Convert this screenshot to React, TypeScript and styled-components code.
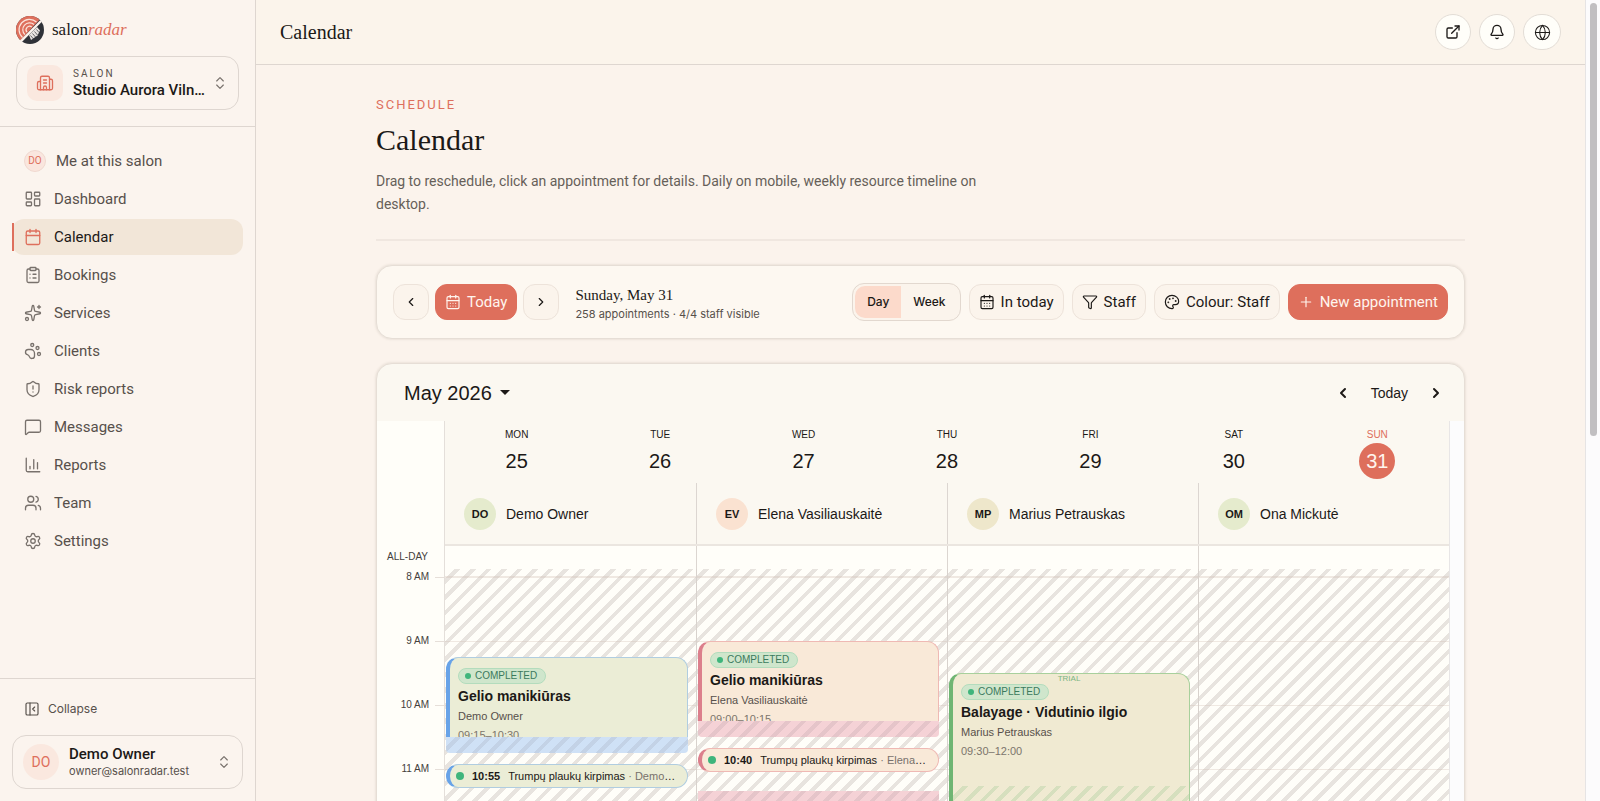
import React from "react";
import styled, { createGlobalStyle, css } from "styled-components";
import {
  Bell, Building2, Calendar as CalendarIcon, CalendarDays, ChartColumn, ChevronLeft, ChevronRight, ChevronsUpDown,
  ClipboardList, ExternalLink, Funnel, Globe, LayoutDashboard, MessageSquare, Palette, PanelLeftClose, PawPrint, Plus,
  Settings, ShieldAlert, Sparkles, Users,
} from "lucide-react";

const c = {
  page: "#fbf3ec",
  header: "#fbf4eb",
  line: "#ded6d0",
  coral: "#de6f5c",
  ink: "#1c1917",
  text: "#57504b",
  soft: "#665f59",
  muted: "#78716c",
  card: "#fdf8f1",
  paper: "#fffef9",
  calHead: "#fbf8f1",
};
const sans = `Roboto, "Liberation Sans", sans-serif`;
const serif = `"Liberation Serif", serif`;
const helv = `"Liberation Sans", Arial, sans-serif`;

const HOUR = 64;
const LEAD = 8;

const Global = createGlobalStyle`
  *, *::before, *::after { box-sizing: border-box; }
  body { margin: 0; background: ${c.page}; color: ${c.ink}; font: 14px/20px ${sans}; }
  button { font: inherit; color: inherit; background: none; border: 0; padding: 0; cursor: pointer; }
  a { color: inherit; text-decoration: none; }
  h1, h2, p { margin: 0; font-weight: 400; }
  svg { flex: none; display: block; }
`;

const Shell = styled.div`
  display: grid;
  grid-template-columns: 256px minmax(0, 1fr) 15px;
  height: 100vh;
  overflow: hidden;
`;

/* Sidebar */
const Sidebar = styled.aside`
  display: flex;
  flex-direction: column;
  border-right: 1px solid ${c.line};
  background: #fbf4ee;
  min-height: 0;
`;
const SidebarTop = styled.div`
  display: flex;
  flex-direction: column;
  gap: 12px;
  padding: 16px;
  border-bottom: 1px solid ${c.line};
`;
const Brand = styled.a`
  display: flex;
  align-items: center;
  gap: 8px;
  height: 28px;
  font: 17px/28px ${serif};
  em { color: ${c.coral}; }
`;
const SwitchCard = styled.button`
  display: flex;
  align-items: center;
  gap: 10px;
  width: 100%;
  height: 54px;
  padding: 0 10px;
  border: 1px solid ${c.line};
  border-radius: 14px;
  text-align: left;
  > svg {
    margin-left: -6px;
    color: ${c.muted};
  }
`;
const SwitchBody = styled.span`
  flex: 1;
  min-width: 0;
  display: flex;
  flex-direction: column;
`;
const Overline = styled.span`
  font-size: 10px;
  line-height: 14px;
  letter-spacing: 2px;
  color: ${c.text};
`;
const Strong = styled.span`
  font-size: 15px;
  line-height: 18px;
  font-weight: 500;
  overflow: hidden;
  white-space: nowrap;
  text-overflow: ellipsis;
`;
const Small = styled.span`
  font: 11px/16px Inter, sans-serif;
  color: ${c.text};
`;
const Tile = styled.span<{ $round?: boolean }>`
  display: grid;
  place-items: center;
  flex: none;
  width: 36px;
  height: 36px;
  border-radius: ${(p) => (p.$round ? "50%" : "10px")};
  background: #fae8df;
  color: ${c.coral};
`;
const Nav = styled.nav`
  flex: 1;
  display: flex;
  flex-direction: column;
  gap: 2px;
  padding: 16px 12px;
`;
const NavItem = styled.a<{ $active?: boolean; $tight?: boolean }>`
  position: relative;
  display: flex;
  align-items: center;
  gap: ${(p) => (p.$tight ? 10 : 12)}px;
  height: 36px;
  padding: 0 12px;
  border-radius: 12px;
  font-size: 15px;
  color: ${c.text};
  > svg { color: ${c.muted}; }
  ${(p) => p.$active && css`
    background: #f2e6d8;
    color: ${c.ink};
    > svg { color: ${c.coral}; }
    &::before {
      content: "";
      position: absolute;
      left: 0;
      top: 4px;
      bottom: 4px;
      width: 2px;
      background: ${c.coral};
    }
  `}
`;
const MiniAvatar = styled.span`
  display: grid;
  place-items: center;
  width: 22px;
  height: 22px;
  border: 1px solid #f0d9d0;
  border-radius: 50%;
  background: #fae6de;
  color: ${c.coral};
  font-size: 10px;
`;
const SidebarFoot = styled.div`
  display: flex;
  flex-direction: column;
  gap: 8px;
  padding: 12px;
  border-top: 1px solid ${c.line};
`;
const Collapse = styled.button`
  display: flex;
  align-items: center;
  gap: 8px;
  height: 36px;
  padding: 0 12px;
  font: 12px/16px Inter, sans-serif;
  color: ${c.text};
`;

/* Main column */
const Main = styled.div`
  display: flex;
  flex-direction: column;
  min-width: 0;
  min-height: 0;
`;
const Header = styled.header`
  display: flex;
  align-items: center;
  justify-content: space-between;
  flex: none;
  height: 65px;
  padding: 0 24px;
  border-bottom: 1px solid ${c.line};
  background: ${c.header};
`;
const HeaderTitle = styled.span`
  font: 20px/28px ${serif};
`;
const Row = styled.div<{ $gap: number }>`
  display: flex;
  align-items: center;
  gap: ${(p) => p.$gap}px;
`;
const RoundButton = styled.button<{ $wide?: boolean }>`
  display: grid;
  place-items: center;
  width: ${(p) => (p.$wide ? 38 : 36)}px;
  height: 36px;
  border: 1px solid #e3ddd6;
  border-radius: 18px;
  background: ${c.paper};
`;
const Scroller = styled.main`
  flex: 1;
  min-height: 0;
  overflow-y: auto;
  scrollbar-width: none;
  padding: 32px 24px;
`;
const Content = styled.div`
  max-width: 1089px;
  margin: 0 auto;
  display: flex;
  flex-direction: column;
  gap: 24px;
`;
const Intro = styled.section`
  padding-bottom: 23px;
  border-bottom: 2px solid #f0e7e0;
`;
const Eyebrow = styled.p`
  font-size: 13px;
  line-height: 16px;
  letter-spacing: 2px;
  color: ${c.coral};
`;
const Title = styled.h1`
  margin-top: 7px;
  font: 30px/40px ${serif};
`;
const Lead = styled.p`
  margin-top: 10px;
  max-width: 640px;
  font-size: 14px;
  line-height: 23px;
  color: ${c.soft};
`;
const cardFrame = css`
  border: 1px solid #e6ded6;
  border-radius: 16px;
  box-shadow: 0 0 2px 1px rgba(110, 95, 75, 0.1);
`;
const Toolbar = styled.section`
  ${cardFrame}
  display: flex;
  align-items: center;
  justify-content: space-between;
  height: 74px;
  padding: 0 16px;
  background: ${c.card};
`;
const ToolButton = styled.button<{ $primary?: boolean; $square?: boolean }>`
  display: flex;
  align-items: center;
  justify-content: center;
  gap: 6px;
  height: 36px;
  ${(p) => (p.$square ? "width: 36px;" : "padding: 0 9px;")}
  border: 1px solid ${(p) => (p.$primary ? c.coral : "#ede3da")};
  border-radius: 12px;
  background: ${(p) => (p.$primary ? c.coral : "#fbf4ec")};
  color: ${(p) => (p.$primary ? "#fff5ee" : c.ink)};
  font-size: 15px;
  white-space: nowrap;
`;
const DateTitle = styled.h2`
  font: 15px/22px ${serif};
`;
const DateBlock = styled.div`
  display: flex;
  flex-direction: column;
  margin-left: 10px;
  padding-top: 2px;
`;
const Segments = styled.div`
  display: flex;
  height: 38px;
  padding: 2px;
  border: 1px solid #e2d8cf;
  border-radius: 12px;
  background: #fbf4ec;
`;
const Segment = styled.button<{ $on?: boolean }>`
  padding: 0 12px;
  border-radius: 10px 0 0 10px;
  background: ${(p) => (p.$on ? "#fcdacb" : "transparent")};
  font: 500 12px/16px Inter, sans-serif;
`;

/* Calendar */
const CalendarCard = styled.section`
  ${cardFrame}
  overflow: hidden;
  background: ${c.calHead};
  font-family: ${helv};
`;
const CalBar = styled.div`
  display: flex;
  align-items: center;
  justify-content: space-between;
  height: 57px;
  padding: 0 20px 0 27px;
`;
const MonthButton = styled.button`
  display: flex;
  align-items: center;
  gap: 8px;
  font-size: 20px;
  &::after {
    content: "";
    border: 5px solid transparent;
    border-top-color: ${c.ink};
    border-bottom-width: 0;
  }
`;
const CalGrid = styled.div`
  display: grid;
  grid-template-columns: 68px minmax(0, 1fr) 15px;
`;
const Gutter = styled.div`
  background: ${c.paper};
  border-right: 1px solid #e4dfda;
`;
const Track = styled.div`
  grid-column: 3;
  grid-row: 1 / span 3;
  background: #fcfcfd;
  border-left: 1px solid #e8e6e6;
`;
const CalHead = styled.div`
  border-bottom: 2px solid #ebe6e0;
`;
const Days = styled.div`
  display: grid;
  grid-template-columns: repeat(7, 1fr);
  height: 62px;
  padding-top: 7px;
`;
const Day = styled.div<{ $today?: boolean }>`
  display: flex;
  flex-direction: column;
  align-items: center;
  font-size: 10px;
  line-height: 14px;
  color: ${(p) => (p.$today ? c.coral : c.ink)};
  b {
    display: grid;
    place-items: center;
    width: 36px;
    height: 36px;
    margin-top: 1px;
    border-radius: 50%;
    font-size: 20px;
    font-weight: 400;
    ${(p) => p.$today && `background: ${c.coral}; color: #fff5ee;`}
  }
`;
const StaffRow = styled.div`
  display: grid;
  grid-template-columns: repeat(4, 1fr);
  height: 61px;
`;
const StaffCell = styled.div`
  display: flex;
  align-items: center;
  gap: 10px;
  padding-left: 19px;
  font-size: 14px;
  & + & { border-left: 1px solid #dcd6d1; }
`;
const StaffAvatar = styled.span<{ $bg: string }>`
  display: grid;
  place-items: center;
  width: 32px;
  height: 32px;
  border-radius: 50%;
  background: ${(p) => p.$bg};
  font-size: 11px;
  font-weight: 700;
`;
const AllDayLabel = styled(Gutter)`
  height: 23px;
  padding-right: 16px;
  font-size: 10px;
  line-height: 22px;
  text-align: right;
  color: #44403c;
`;
const AllDayRow = styled.div`
  display: grid;
  grid-template-columns: repeat(4, 1fr);
  background: ${c.paper};
  span + span { border-left: 1px solid #dcd6d1; }
`;
const Hours = styled(Gutter)`
  padding-top: ${LEAD - 7}px;
`;
const HourLabel = styled.div`
  display: flex;
  align-items: flex-start;
  justify-content: flex-end;
  gap: 6px;
  height: ${HOUR}px;
  font-size: 10px;
  line-height: 14px;
  color: #44403c;
  &::after {
    content: "";
    width: 9px;
    margin-top: 7px;
    border-top: 1px solid #e6dfd9;
  }
`;
const Columns = styled.div`
  display: grid;
  grid-template-columns: repeat(4, 1fr);
  background:
    repeating-linear-gradient(to bottom, rgba(205, 185, 172, 0.3) 0 1px, transparent 1px ${HOUR}px) 0 ${LEAD}px,
    repeating-linear-gradient(135deg, transparent 0 7px, #e8e4df 7px 11px),
    ${c.paper};
`;
const Column = styled.div`
  position: relative;
  & + & { border-left: 1px solid #d8d2cd; }
`;
const Slot = styled.div<{ $at: number; $len: number }>`
  position: absolute;
  left: 1px;
  right: 8px;
  top: ${(p) => LEAD + Math.round((p.$at * HOUR) / 60)}px;
  height: ${(p) => Math.round((p.$len * HOUR) / 60)}px;
`;
const stripes = "repeating-linear-gradient(135deg, transparent 0 7px, rgba(90, 80, 90, 0.1) 7px 11px)";
const Buffer = styled(Slot)<{ $color: string }>`
  background: ${stripes}, ${(p) => p.$color};
  border-radius: 0 0 4px 4px;
`;
type Tone = { edge: string; line: string; fill: string };
const Event = styled(Slot)<{ $tone: Tone }>`
  display: flex;
  flex-direction: column;
  align-items: flex-start;
  overflow: hidden;
  padding: 10px 8px 0;
  border: 1px solid ${(p) => p.$tone.line};
  border-left: 4px solid ${(p) => p.$tone.edge};
  border-bottom: 0;
  border-radius: 12px 12px 0 0;
  background: ${(p) => p.$tone.fill};
`;
const Pill = styled(Slot)<{ $tone: Tone }>`
  height: 24px;
  display: flex;
  align-items: center;
  gap: 8px;
  padding: 0 10px 0 6px;
  border: 1px solid ${(p) => p.$tone.line};
  border-left: 4px solid ${(p) => p.$tone.edge};
  border-radius: 12px;
  background: ${(p) => p.$tone.fill};
  font-size: 11px;
`;
const Dot = styled.i<{ $size: number }>`
  flex: none;
  width: ${(p) => p.$size}px;
  height: ${(p) => p.$size}px;
  border-radius: 50%;
  background: #3fb57c;
`;
const PillText = styled.span`
  overflow: hidden;
  white-space: nowrap;
  text-overflow: ellipsis;
  span { color: ${c.muted}; }
`;
const Status = styled.span`
  display: flex;
  align-items: center;
  gap: 4px;
  height: 16px;
  padding: 0 8px 0 6px;
  border: 1px solid #b3dcbd;
  border-radius: 8px;
  background: #cfe6cc;
  color: #3b7a5c;
  font-size: 10px;
  line-height: 14px;
`;
const EventTitle = styled.strong`
  margin-top: 3px;
  font-size: 14px;
  line-height: 18px;
`;
const EventLine = styled.span<{ $soft?: boolean }>`
  margin-top: 3px;
  font-size: 11px;
  line-height: 16px;
  color: ${(p) => (p.$soft ? "#7c756c" : "#57504b")};
`;
const Trial = styled.span`
  position: absolute;
  top: 0;
  left: 0;
  right: 4px;
  text-align: center;
  font-size: 8px;
  line-height: 9px;
  color: #7db583;
`;
const Prep = styled.div`
  position: absolute;
  left: 0;
  right: 0;
  top: 112px;
  bottom: 0;
  background: repeating-linear-gradient(135deg, transparent 0 7px, rgba(110, 180, 110, 0.2) 7px 11px);
`;

/* Page scroll indicator */
const ScrollTrack = styled.div`
  padding: 3px 3px 0 4px;
  border-left: 1px solid #e6e4e4;
  background: #fcfbfc;
`;
const Thumb = styled.div`
  height: 54vh;
  border-radius: 4px;
  background: #c1bfc1;
`;

const Logo = () => (
  <svg width="28" height="28" viewBox="0 0 28 28" aria-hidden="true">
    <circle cx="14" cy="14" r="14" fill="#2f3238" />
    <path d="M4.500 24.300A14 14 0 1 1 23.500 3.700Z" fill={c.coral} />
    <g fill="none" stroke="#fbe3da" strokeWidth="1.200">
      <path d="M6.500 21.500A10.300 10.300 0 0 1 20.500 6" />
      <path d="M8.900 18.600A6.800 6.800 0 0 1 18 8.500" />
      <path d="M11 16.200A3.600 3.600 0 0 1 15.800 10.900" />
    </g>
    <path d="M4.800 25.400 25 5" stroke="#fbf4ee" strokeWidth="2.400" />
    <path d="M13 19 21 11l3 3.500-2.500 5-6.500 4.500Z" fill="#e9e5e2" />
    <path d="m14.500 19.500 3 3.500M16.500 17.500l3 3.500M18.500 15.500l3 3.500M20.500 13.500l2.500 3" stroke="#2f3238" strokeWidth=".7" />
  </svg>
);

const nav = [
  { label: "Dashboard", Icon: LayoutDashboard },
  { label: "Calendar", Icon: CalendarIcon, active: true },
  { label: "Bookings", Icon: ClipboardList },
  { label: "Services", Icon: Sparkles },
  { label: "Clients", Icon: PawPrint },
  { label: "Risk reports", Icon: ShieldAlert },
  { label: "Messages", Icon: MessageSquare },
  { label: "Reports", Icon: ChartColumn },
  { label: "Team", Icon: Users },
  { label: "Settings", Icon: Settings },
];
const days = [["MON", 25], ["TUE", 26], ["WED", 27], ["THU", 28], ["FRI", 29], ["SAT", 30], ["SUN", 31]];
const staff = [
  ["DO", "Demo Owner", "#e5ebcd"],
  ["EV", "Elena Vasiliauskaitė", "#fae2d1"],
  ["MP", "Marius Petrauskas", "#eee7cb"],
  ["OM", "Ona Mickutė", "#e5ebcd"],
];
const hours = ["8 AM", "9 AM", "10 AM", "11 AM", "12 PM", "1 PM", "2 PM", "3 PM", "4 PM", "5 PM"];
const blue: Tone = { edge: "#68a3e8", line: "#b0cde0", fill: "#ebedd6" };
const pink: Tone = { edge: "#dc7f8c", line: "#efb9b4", fill: "#f9e9d8" };
const green: Tone = { edge: "#6fb573", line: "#a8d09c", fill: "#f0ead2" };

const Card = ({ at, len, tone, title, who, time, children }: {
  at: number; len: number; tone: Tone; title: string; who: string; time: string; children?: React.ReactNode;
}) => (
  <Event $at={at} $len={len} $tone={tone}>
    {children}
    <Status><Dot $size={6} />COMPLETED</Status>
    <EventTitle>{title}</EventTitle>
    <EventLine>{who}</EventLine>
    <EventLine $soft>{time}</EventLine>
  </Event>
);
const Chip = ({ at, tone, time, title, who }: { at: number; tone: Tone; time: string; title: string; who: string }) => (
  <Pill $at={at} $len={22} $tone={tone}>
    <Dot $size={8} />
    <b>{time}</b>
    <PillText>{title} <span>· {who}</span></PillText>
  </Pill>
);

export default function App() {
  return (
    <>
      <Global />
      <Shell>
        <Sidebar>
          <SidebarTop>
            <Brand href="#"><Logo /><span>salon<em>radar</em></span></Brand>
            <SwitchCard>
              <Tile><Building2 size={18} strokeWidth={1.75} /></Tile>
              <SwitchBody>
                <Overline>SALON</Overline>
                <Strong>Studio Aurora Vilnius</Strong>
              </SwitchBody>
              <ChevronsUpDown size={16} strokeWidth={1.75} />
            </SwitchCard>
          </SidebarTop>
          <Nav>
            <NavItem href="#" $tight><MiniAvatar>DO</MiniAvatar>Me at this salon</NavItem>
            {nav.map(({ label, Icon, active }) => (
              <NavItem key={label} href="#" $active={active}><Icon size={18} strokeWidth={1.75} />{label}</NavItem>
            ))}
          </Nav>
          <SidebarFoot>
            <Collapse><PanelLeftClose size={16} strokeWidth={1.75} />Collapse</Collapse>
            <SwitchCard>
              <Tile $round>DO</Tile>
              <SwitchBody>
                <Strong>Demo Owner</Strong>
                <Small>owner@salonradar.test</Small>
              </SwitchBody>
              <ChevronsUpDown size={16} strokeWidth={1.75} />
            </SwitchCard>
          </SidebarFoot>
        </Sidebar>

        <Main>
          <Header>
            <HeaderTitle>Calendar</HeaderTitle>
            <Row $gap={8}>
              <RoundButton aria-label="Open site"><ExternalLink size={16} /></RoundButton>
              <RoundButton aria-label="Notifications"><Bell size={16} /></RoundButton>
              <RoundButton $wide aria-label="Language"><Globe size={17} strokeWidth={1.5} /></RoundButton>
            </Row>
          </Header>
          <Scroller>
            <Content>
              <Intro>
                <Eyebrow>SCHEDULE</Eyebrow>
                <Title>Calendar</Title>
                <Lead>Drag to reschedule, click an appointment for details. Daily on mobile, weekly resource timeline on desktop.</Lead>
              </Intro>
              <Toolbar>
                <Row $gap={6}>
                  <ToolButton $square aria-label="Previous day"><ChevronLeft size={14} /></ToolButton>
                  <ToolButton $primary><CalendarDays size={16} strokeWidth={1.75} />Today</ToolButton>
                  <ToolButton $square aria-label="Next day"><ChevronRight size={14} /></ToolButton>
                  <DateBlock>
                    <DateTitle>Sunday, May 31</DateTitle>
                    <Small>258 appointments · 4/4 staff visible</Small>
                  </DateBlock>
                </Row>
                <Row $gap={8}>
                  <Segments>
                    <Segment $on>Day</Segment>
                    <Segment>Week</Segment>
                  </Segments>
                  <ToolButton><CalendarDays size={16} strokeWidth={1.75} />In today</ToolButton>
                  <ToolButton><Funnel size={16} strokeWidth={1.75} />Staff</ToolButton>
                  <ToolButton><Palette size={16} strokeWidth={1.75} />Colour: Staff</ToolButton>
                  <ToolButton $primary><Plus size={16} strokeWidth={1.75} />New appointment</ToolButton>
                </Row>
              </Toolbar>
              <CalendarCard>
                <CalBar>
                  <MonthButton>May 2026</MonthButton>
                  <Row $gap={20}>
                    <button aria-label="Previous"><ChevronLeft size={16} strokeWidth={3} /></button>
                    <button>Today</button>
                    <button aria-label="Next"><ChevronRight size={16} strokeWidth={3} /></button>
                  </Row>
                </CalBar>
                <CalGrid>
                  <Gutter />
                  <CalHead>
                    <Days>
                      {days.map(([d, n]) => <Day key={d} $today={n === 31}>{d}<b>{n}</b></Day>)}
                    </Days>
                    <StaffRow>
                      {staff.map(([i, name, bg]) => (
                        <StaffCell key={name}><StaffAvatar $bg={bg}>{i}</StaffAvatar>{name}</StaffCell>
                      ))}
                    </StaffRow>
                  </CalHead>
                  <Track />
                  <AllDayLabel>ALL-DAY</AllDayLabel>
                  <AllDayRow><span /><span /><span /><span /></AllDayRow>
                  <Hours>{hours.map((h) => <HourLabel key={h}>{h}</HourLabel>)}</Hours>
                  <Columns>
                    <Column>
                      <Card at={75} len={75} tone={blue} title="Gelio manikiūras" who="Demo Owner" time="09:15–10:30" />
                      <Buffer $at={150} $len={15} $color="#cfe1f6" />
                      <Chip at={175} tone={blue} time="10:55" title="Trumpų plaukų kirpimas" who="Demo Owner" />
                    </Column>
                    <Column>
                      <Card at={60} len={75} tone={pink} title="Gelio manikiūras" who="Elena Vasiliauskaitė" time="09:00–10:15" />
                      <Buffer $at={135} $len={15} $color="#f5d2d6" />
                      <Chip at={160} tone={pink} time="10:40" title="Trumpų plaukų kirpimas" who="Elena Vasiliauskaitė" />
                      <Buffer $at={201} $len={15} $color="#f5d2d6" />
                    </Column>
                    <Column>
                      <Card at={90} len={150} tone={green} title="Balayage · Vidutinio ilgio" who="Marius Petrauskas" time="09:30–12:00">
                        <Trial>TRIAL</Trial>
                        <Prep />
                      </Card>
                    </Column>
                    <Column />
                  </Columns>
                </CalGrid>
              </CalendarCard>
            </Content>
          </Scroller>
        </Main>
        <ScrollTrack><Thumb /></ScrollTrack>
      </Shell>
    </>
  );
}
